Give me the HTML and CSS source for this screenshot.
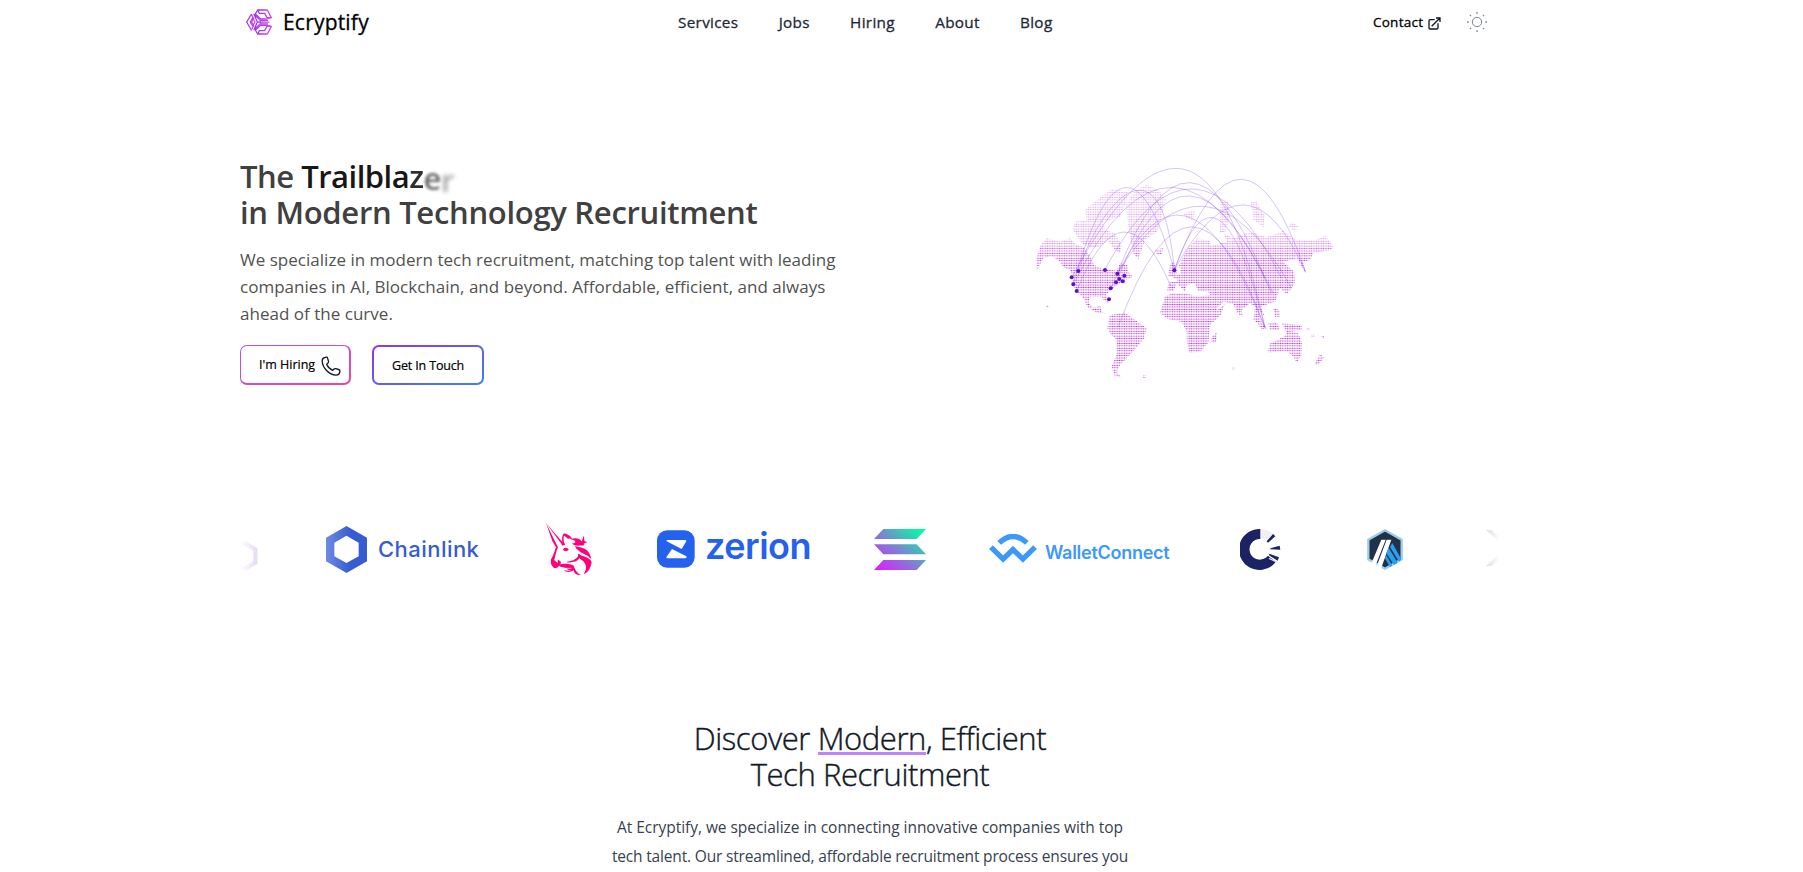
FILE: index.html
```html
<!DOCTYPE html>
<html lang="en">
<head>
<meta charset="utf-8">
<title>Ecryptify</title>
<link rel="stylesheet" href="styles.css">
</head>
<body>
<div class="page">
  <header class="header">
    <a class="brand">
      <svg class="brand-mark" viewBox="0 0 78 78">
        <defs><linearGradient id="bm" x1="0" x2="1"><stop offset="0" stop-color="#9333ea"/><stop offset="1" stop-color="#d946ef"/></linearGradient></defs>
        <g fill="none" stroke="url(#bm)" stroke-width="3.8" stroke-linejoin="round">
          <path d="M2 39 16 16 23 28 17 39 23 50 16 63Z"/>
          <path d="M13 39 20 27 27 39 20 51Z"/>
          <path d="M24 16 43 34V44L24 62 34 39Z"/>
          <path d="M34 39.500H70M43 34H66M43 45H66"/>
          <path d="M35 3H64L76 26H63L56 13H40Z"/>
          <path d="M35 75H64L76 52H63L56 65H40Z"/>
          <path d="M35 3 28 15 44 30H62L76 26M35 75 28 63 44 49H62L76 52"/>
        </g>
      </svg>
      <span class="brand-name">Ecryptify</span>
    </a>
    <nav class="nav">
      <a>Services</a><a>Jobs</a><a>Hiring</a><a>About</a><a>Blog</a>
    </nav>
    <div class="tools">
      <a class="contact">Contact</a>
      <svg class="ext" viewBox="0 0 39 39" fill="none" stroke="#111827" stroke-width="4"><path d="M20 8H6Q3 8 3 11V33Q3 36 6 36H26Q30 36 30 33V19M11 28 35 4M24 3H36V15"/></svg>
      <svg class="sun" viewBox="0 0 60 60" fill="none" stroke="#7b8494" stroke-width="3"><circle cx="30" cy="30" r="14"/><path stroke-width="4" d="M30 0v5M30 55v5M0 30h5M55 30h5M9 9l3 3M48 48l3 3M9 51l3-3M48 12l3-3"/></svg>
    </div>
  </header>

  <section class="hero">
    <div class="intro">
      <h1 class="title"><span class="t1">The <span class="dark">Trailbla<span class="z">z</span><span class="e">e</span><span class="r">r</span></span></span><br><span class="t2">in Modern Technology Recruitment</span></h1>
      <p class="lead">We specialize in modern tech recruitment, matching top talent with leading<br>companies in AI, Blockchain, and beyond. Affordable, efficient, and always<br>ahead of the curve.</p>
      <div class="actions">
        <a class="btn hiring"><span>I'm Hiring</span>
          <svg class="phone" viewBox="0 0 24 24" fill="none" stroke="#111827" stroke-width="1.6" stroke-linejoin="round"><path d="M5.200 1.500C6.600 1 7.600 1.300 8 2.800L9 6.500C9.300 8 8.800 8.600 6.800 9.900C8 12.800 10.500 15.600 14 17.300C15.300 15.300 16.200 14.800 17.700 15.200L21.200 16.200C22.700 16.700 23 17.700 22.600 19.300C22 22 20.500 23 18 22.900C9.500 22.300 1.800 14.300 1.400 6C1.300 3.500 2.700 2.200 5.200 1.500Z"/></svg>
        </a>
        <a class="btn touch"><span>Get In Touch</span></a>
      </div>
    </div>
    <svg class="map" viewBox="0 0 990 720">
      <defs>
        <pattern id="dots" width="7.2" height="7.3" patternUnits="userSpaceOnUse">
          <ellipse cx="3.6" cy="3.600" rx="2.5" ry="1.900" fill="#b81fdb"/>
        </pattern>
        <linearGradient id="fade" x1="0" y1="0" x2="0" y2="1"><stop offset=".1" stop-color="#fff" stop-opacity=".35"/><stop offset=".36" stop-color="#fff" stop-opacity=".5"/><stop offset=".46" stop-color="#fff"/><stop offset="1" stop-color="#fff"/></linearGradient>
        <mask id="m" maskUnits="userSpaceOnUse" x="0" y="0" width="990" height="720"><rect width="990" height="720" fill="url(#fade)"/></mask>
      </defs>
      <g mask="url(#m)"><path fill="url(#dots)" d="M50 322 62 285 80 264 120 275 150 264 170 285 190 290 210 318 222 345 250 358 290 362 300 340 322 345 325 365 338 380 318 390 300 400 278 415 258 435 268 460 252 452 245 440 208 442 206 460 222 475 240 466 245 485 262 492 235 490 202 472 190 445 172 425 155 400 158 375 150 360 130 352 120 335 95 318 70 325 50 362Z
        M190 285 158 240 165 215 200 210 195 180 230 150 275 118 325 125 318 160 300 200 250 215 255 240 285 250 305 285 300 310 285 300 262 270 240 290 215 292Z
        M318 160 345 122 380 104 415 120 438 150 425 200 412 245 375 270 355 328 340 310 330 260 322 210Z
        M405 300 430 294 425 312 410 312Z M444 378 450 345 460 335 472 360 468 380Z
        M262 535 270 495 315 488 345 510 380 535 372 565 345 598 320 625 300 645 290 665 304 682 285 680 275 650 290 610 290 570 270 550Z
        M420 490 435 440 455 430 500 430 530 440 570 435 592 480 614 462 602 495 570 525 565 578 540 606 508 608 500 570 500 545 485 515 445 508Z
        M572 580 576 558 592 546 588 575Z
        M442 424 445 398 475 393 458 382 482 372 478 345 500 300 530 265 570 272 572 288 620 275 610 250 640 265 690 245 740 262 790 243 830 270 880 272 915 258 942 292 930 300 880 310 870 330 850 335 855 365 830 325 790 335 822 365 825 395 815 415 800 432 780 415 765 455 735 465 722 470 735 500 715 480 728 530 700 510 705 470 690 460 665 480 668 500 652 490 640 462 610 455 590 475 565 425 535 425 525 400 500 405 495 425 470 400 460 425ZM520 335 512 360 490 362 510 325Z
        M490 190 525 180 520 210 500 205ZM600 250 602 155 625 155 630 200 615 245ZM692 155 710 155 735 200 730 232 700 210ZM805 230 815 215 835 230 825 245Z
        M760 475 778 480 780 500 765 500ZM700 500 715 510 742 535 725 538ZM745 520 770 515 780 540 750 540ZM785 520 845 525 845 540 800 548Z
        M745 608 748 582 795 558 800 545 835 550 846 580 844 615 830 638 820 620 800 602Z M883 645 900 612 912 622 895 645ZM78 465h8v7h-8zM637 653h7v7h-7zM370 676h7v7h-7zM860 535h8v8h-8zM875 552h8v8h-8zM905 558h7v7h-7z"/></g>
      <g fill="none" stroke="#6d28d9" stroke-width="3" stroke-opacity=".27">
        <path d="M155 383Q544-341 735 533"/><path d="M160 400Q317-155 463 360"/><path d="M175 363C240 160 425-60 463 360"/>
        <path d="M160 403Q460-192 760 430"/><path d="M292 371Q505-182 735 385"/><path d="M255 358Q520-138 785 385"/>
        <path d="M288 397Q500-138 755 430"/><path d="M292 371Q552-55 815 415"/><path d="M272 415Q490-78 735 533"/>
        <path d="M295 530Q515-70 735 533"/><path d="M463 360Q668-188 857 367"/><path d="M463 360Q680-34 857 367"/>
        <path d="M463 360Q595-26 735 533"/><path d="M170 423Q310 76 453 410"/>
      </g>
      <g fill="#5b10d0"><circle cx="175" cy="363" r="6"/><circle cx="155" cy="382" r="6"/><circle cx="160" cy="403" r="6"/><circle cx="170" cy="423" r="6"/><circle cx="255" cy="360" r="6"/><circle cx="292" cy="371" r="6"/><circle cx="313" cy="377" r="6"/><circle cx="298" cy="387" r="6"/><circle cx="288" cy="397" r="6"/><circle cx="308" cy="394" r="6"/><circle cx="272" cy="415" r="6"/><circle cx="267" cy="448" r="6"/><circle cx="463" cy="361" r="6"/></g>
    </svg>
  </section>

  <section class="logos">
    <svg class="g-edge" viewBox="0 0 57 90"><defs><linearGradient id="ef" x1="0" x2="1"><stop offset="0" stop-color="#e9ddfb" stop-opacity="0"/><stop offset="1" stop-color="#e9ddfb"/></linearGradient></defs><path d="M0 10 14 7 46 25V65L14 83 0 80" fill="none" stroke="url(#ef)" stroke-width="13"/></svg>
    <svg class="g-link" viewBox="0 0 123 141"><defs><linearGradient id="cl" x1="0" x2="1"><stop offset="0" stop-color="#6f8ce2"/><stop offset=".6" stop-color="#375bd2"/></linearGradient></defs><path fill="url(#cl)" fill-rule="evenodd" d="M61.500 0 123 35V106L61.500 141 0 106V35ZM61.500 29 25 50V91L61.500 111 98 91V50Z"/></svg>
    <span class="w-link">Chainlink</span>
    <svg class="g-uni" viewBox="0 0 145 160"><g fill="#ff007a">
      <path d="M3 0 59 65 52 69 49 62ZM3 0 38 71 33 73 22 54Z"/>
      <path d="M34 71C28 86 26 98 19 108C15 118 19 130 29 137L38 134C45 128 49 123 48 117L39 110 38 121 28 112C32 100 33 85 40 72Z"/>
      <path d="M55 68C49 50 52 32 59 32C72 34 80 44 84 50C78 47 72 46 70 48C65 44 60 38 57 39C55 48 57 60 61 66Z"/>
      <path d="M78 49C91 44 104 45 111 56L117 38 119 54 128 58 119 61 116 69C106 66 93 73 80 61C90 64 95 57 89 53Z"/>
      <path d="M90 70C112 74 134 76 140 109L134 104C128 94 102 92 90 70Z"/>
      <path d="M99 92C116 104 137 102 141 119C138 134 133 147 117 155C130 134 125 119 102 106Z"/>
      <path d="M54 79C60 73 68 74 72 81C66 87 57 86 54 79Z"/>
      <path d="M39 126C56 121 73 122 86 128C91 139 94 149 108 157C96 158 88 154 86 143C79 148 66 151 57 143L72 144 64 136 47 132Z"/>
      <path d="M67 117C85 114 99 109 103 93C110 112 93 120 67 119Z"/>
    </g><path d="M64 137H80M69 143H77" stroke="#fff" stroke-width="2"/></svg>
    <svg class="g-zer" viewBox="0 0 114 114"><rect y="1" width="113" height="112" rx="31" fill="#2461ed"/><path fill="#fff" d="M31 30H84Q90 30 87 35L74 57 29 34Q27 30 31 30ZM45 57 88 79Q91 84 84 85H31Q26 84 29 80Z"/></svg>
    <span class="w-zer">zerion</span>
    <svg class="g-sol" viewBox="0 0 156 123"><defs><linearGradient id="so" gradientUnits="userSpaceOnUse" x1="20" y1="130" x2="130" y2="-5"><stop offset="0" stop-color="#dc1fff"/><stop offset=".5" stop-color="#7b84d0"/><stop offset="1" stop-color="#00ffa3"/></linearGradient></defs><path fill="url(#so)" d="M28 0H156L128 30H0ZM0 46H128L156 76H28ZM28 93H156L128 123H0Z"/></svg>
    <svg class="g-wal" viewBox="0 0 144 88"><g fill="none" stroke="#3b99fc" stroke-width="16"><path d="M30 27Q72-12 114 27"/><path stroke-linejoin="miter" d="M5 40 42 76 72 47 102 76 139 40"/></g></svg>
    <span class="w-wal">WalletConnect</span>
    <svg class="g-cir" viewBox="0 0 123 123"><path fill="#1b2364" d="M61 0A61.500 61.500 0 1 0 107 99L84 80A31 31 0 1 1 61 30Z"/><path fill="#f0f0f1" d="M64 0Q88 2 101 15L82 34Q75 30 64 30Z"/><path fill="#1b2364" d="M80 37 99 15 106 22 84 41ZM91 58 119 50 121 62 91 61ZM88 74 117 85 113 95 87 79Z"/><path d="M87 88 109 99" stroke="#d8d9e4" stroke-width="4"/></svg>
    <svg class="g-arb" viewBox="0 0 108 123"><path d="M54 4 104 32V91L54 119 4 91V32Z" fill="#213147" stroke="#9dcced" stroke-width="7"/><path fill="#fff" d="M12 106 43 32H56L24 114ZM29 112 59 32H73L42 119Z"/><path fill="#28a0f0" d="M58 73 65 56 92 101 81 108ZM69 54 76 42 103 91 96 98ZM54 88 58 79 76 110 69 114Z"/></svg>
    <svg class="g-next" viewBox="0 0 42 108"><defs><linearGradient id="nf" x1="0" x2="1"><stop offset="0" stop-color="#ddd"/><stop offset="1" stop-color="#fff"/></linearGradient></defs><path fill="url(#nf)" d="M0 0H18L42 24V38ZM0 108H18L42 84V70Z"/></svg>
  </section>

  <section class="discover">
    <h2 class="sub">Discover <span class="mark">Modern</span>, Efficient<br>Tech Recruitment</h2>
    <p class="body">At Ecryptify, we specialize in connecting innovative companies with top<br><span class="tight">tech talent. Our streamlined, affordable recruitment process ensures you</span></p>
  </section>
</div>
</body>
</html>
```
FILE: styles.css
```css
* { box-sizing: border-box; }
body { margin: 0; background: #fff; font-family: "Open Sans", "Noto Sans", sans-serif; color: #000; overflow: hidden; height: 872px; }
svg { display: block; flex: none; }
span, a { white-space: nowrap; }
.page { width: 1260px; margin-left: 240px; }
.header { height: 43px; display: flex; align-items: center; }
.brand { display: flex; align-items: center; gap: 11px; padding-left: 6px; width: 438px; }
.brand-mark { width: 26px; height: 26px; }
.brand-name { font-size: 21px; font-weight: 500; line-height: 30px; letter-spacing: .2px; -webkit-text-stroke: .3px; }
.nav { display: flex; gap: 40.300px; font-size: 15.300px; font-weight: 500; letter-spacing: .3px; color: #1f2937; -webkit-text-stroke: .3px; width: 695px; }
.tools { display: flex; align-items: center; }
.contact { font-size: 13.500px; font-weight: 500; letter-spacing: .25px; -webkit-text-stroke: .3px; }
.ext { width: 13px; height: 13px; margin: 3px 0 0 5px; }
.sun { width: 20px; height: 20px; margin-left: 26px; }
.hero { display: flex; height: 345px; margin-top: 107px; }
.intro { width: 780px; padding-top: 8px; }
.title { margin: 0; font-size: 31px; line-height: 36px; font-weight: 600; color: #404040; letter-spacing: -.3px; }
.t1 { letter-spacing: -.5px; }
.dark { color: #171717; }
.z { opacity: .9; }
.e { display: inline-block; opacity: .65; filter: blur(1.500px); transform: translateY(2px); }
.r { display: inline-block; opacity: .4; filter: blur(2.300px); transform: translateY(4px); }
.lead { margin: 16px 0 0; font-size: 17px; line-height: 27px; color: #525252; letter-spacing: .02px; }
.actions { display: flex; gap: 21px; margin-top: 18px; }
.btn { display: flex; align-items: center; width: 112px; height: 40px; border-radius: 7px; border: 2px solid transparent; font-size: 12.500px; font-weight: 500; padding-left: 18px; -webkit-text-stroke: .2px; }
.hiring { background: linear-gradient(#fff, #fff) padding-box, linear-gradient(to bottom right, #a855f7, #ec4899) border-box; border-width: 1px 2px 2px 1px; width: 111px; padding-left: 18px; gap: 6px; }
.touch { background: linear-gradient(#fff, #fff) padding-box, linear-gradient(to bottom right, #9333ea, #3b82f6) border-box; letter-spacing: -.15px; }
.phone { width: 20px; height: 20px; margin-top: 2px; }
.map { width: 330px; height: 240px; }
.logos { display: flex; height: 80px; align-items: flex-start; margin-top: 14px; }
.g-edge { width: 19px; height: 30px; margin-top: 32px; }
.g-link { width: 41px; height: 47px; margin: 17px 0 0 67px; }
.w-link { font: 500 22px/30px Inter, sans-serif; letter-spacing: .45px; color: #375bd2; margin: 25px 0 0 11px; width: 101px; }
.g-uni { width: 48px; height: 53px; margin: 14px 0 0 66px; }
.g-zer { width: 38px; height: 38px; margin: 21px 0 0 64px; }
.w-zer { font: 600 36px/40px Inter, sans-serif; letter-spacing: -.5px; color: #2461ed; margin: 17px 0 0 10px; width: 106px; }
.g-sol { width: 52px; height: 41px; margin: 20px 0 0 63px; }
.g-wal { width: 48px; height: 29px; margin: 25px 0 0 63px; }
.w-wal { font: 600 18px/26px Inter, sans-serif; letter-spacing: -.27px; color: #3b99fc; margin: 31px 0 0 8px; width: 124px; }
.g-cir { width: 41px; height: 41px; margin: 20px 0 0 71px; }
.g-arb { width: 36px; height: 41px; margin: 20px 0 0 86px; }
.g-next { width: 14px; height: 36px; margin: 21px 0 0 83px; }
.discover { text-align: center; margin-top: 131px; }
.sub { margin: 0; font-size: 31px; line-height: 36px; font-weight: 300; letter-spacing: -.42px; color: #111827; -webkit-text-stroke: .4px #111827; }
.mark { background: linear-gradient(#c084fc, #c084fc) 0 100% / 100% 3px no-repeat; display: inline-block; height: 35px; line-height: 36px; vertical-align: top; }
.body { margin: 21px 0 0; font-size: 15.500px; line-height: 29px; color: #374151; letter-spacing: -.04px; }
.tight { letter-spacing: -.17px; }
```
